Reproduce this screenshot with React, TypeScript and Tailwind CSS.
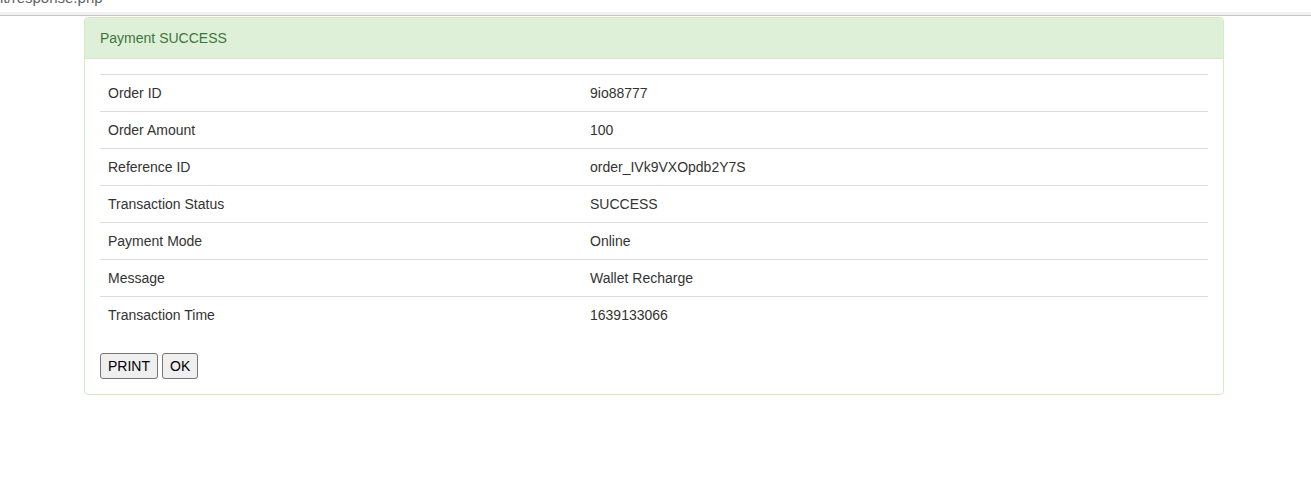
const rows: [string, string][] = [
	['Order ID', '9io88777'],
	['Order Amount', '100'],
	['Reference ID', 'order_IVk9VXOpdb2Y7S'],
	['Transaction Status', 'SUCCESS'],
	['Payment Mode', 'Online'],
	['Message', 'Wallet Recharge'],
	['Transaction Time', '1639133066']
];

const App = () => {
	return (
		<div className="min-h-[504px] bg-white font-['Liberation_Sans',Arial,sans-serif] text-[14px] leading-[20px] text-[#333]">
			{/* cropped browser address strip */}
			<div className="h-[12px] overflow-hidden">
				<div className="-mt-[12px] text-[15px] leading-[20px] text-[#5f6368]">it/response.php</div>
			</div>
			<div className="h-[3px] bg-[#f2f2f2]" />
			<div className="h-px bg-[#c6c6c6]" />

			<div className="ml-[84px] w-[1140px] pt-px">
				<div className="rounded-[4px] border border-[#d6e9c6] bg-white">
					<div className="rounded-t-[3px] border-b border-[#d6e9c6] bg-[#dff0d8] px-[15px] py-[10px] text-[#3c763d]">
						Payment SUCCESS
					</div>
					<div className="p-[15px]">
						<table className="mb-[20px] w-full border-collapse">
							<tbody>
								{rows.map(([label, value]) => (
									<tr key={label} className="border-t border-[#ddd]">
										<td className="w-[482px] p-[8px] align-top">{label}</td>
										<td className="p-[8px] align-top">{value}</td>
									</tr>
								))}
							</tbody>
						</table>
						<div className="flex gap-[4px]">
							<button className="rounded-[3px] border border-[#767676] bg-[#efefef] px-[7px] py-[2px] leading-[20px] text-black">
								PRINT
							</button>
							<button className="rounded-[3px] border border-[#767676] bg-[#efefef] px-[7px] py-[2px] leading-[20px] text-black">
								OK
							</button>
						</div>
					</div>
				</div>
			</div>
		</div>
	);
};

export default App;
